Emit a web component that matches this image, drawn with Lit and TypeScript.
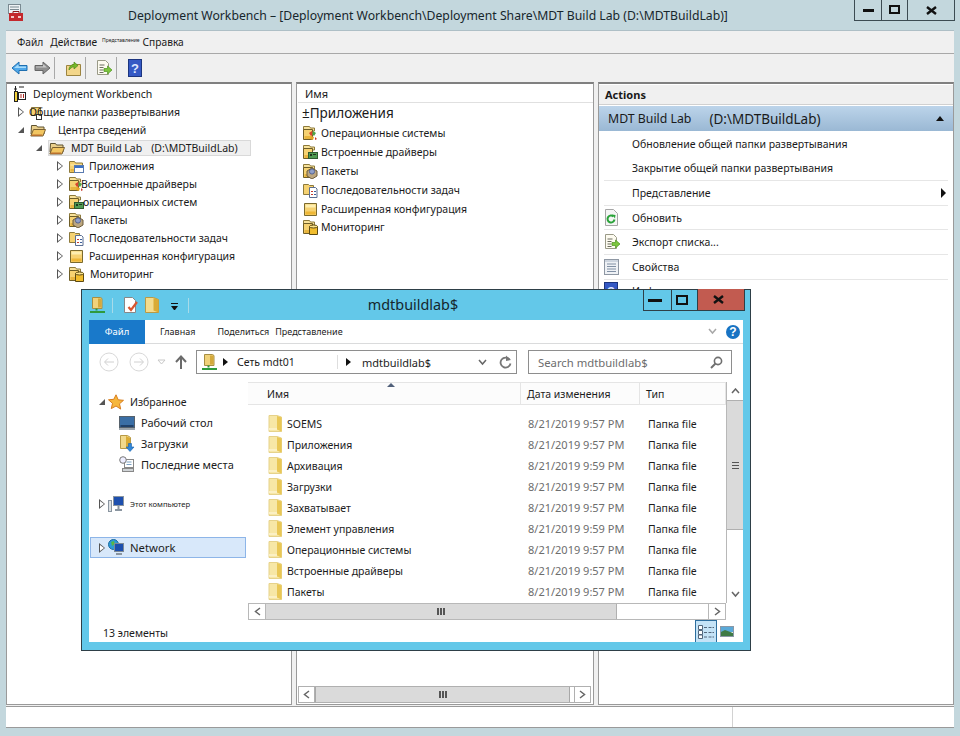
import { LitElement, css, html, svg } from "lit";
import { customElement } from "lit/decorators.js";

const icon = (w: number, h: number, body: unknown) =>
  html`<svg class="ico" width=${w} height=${h} viewBox="0 0 ${w} ${h}">${body}</svg>`;

const folderBase = svg`
  <path d="M1.500 3.500h5l1 1.500h7v9.500h-13z" fill="#f6d272" stroke="#8d7a3c"/>
  <path d="M2.500 6.500h11v1h-11z" fill="#fdeeb0"/>
  <path d="M2.500 11h11v2.500h-11z" fill="#e8b53e"/>`;

const backFolder = svg`
  <path d="M1.500 1.500h6l1 1.500h4v3h-11z" fill="#f8e29a" stroke="#8d7a3c"/>
  <path d="M1.500 4.500h9v10h-9z" fill="#f6d272" stroke="#6e5e28"/>
  <path d="M2.500 11h7v3h-7z" fill="#e8b53e"/>`;

const chevRight = svg`<path d="M1 1l4.500 3.500L1 8" fill="none" stroke="#666" stroke-width="1.500"/>`;
const chevLeft = svg`<path d="M6 1L1.500 4.500 6 8" fill="none" stroke="#666" stroke-width="1.500"/>`;

const icons: Record<string, () => unknown> = {
  open: () => icon(16, 16, svg`
    <path d="M1.500 3.500h5l1 1.500h6.500v7h-13z" fill="#e9cf8c" stroke="#5e5230"/>
    <path d="M3.500 7.500h12l-2.500 6.500H.8z" fill="#f2c661" stroke="#7a6030"/>
    <path d="M2 12.500h10.500l-1 1.500H1.500z" fill="#b9702e"/>`),
  apps: () => icon(16, 16, svg`${folderBase}
    <rect x="6.500" y="7.500" width="9" height="7" fill="#fff" stroke="#5a7bb0"/>
    <rect x="7" y="8" width="8" height="2" fill="#3d72c4"/>`),
  os: () => icon(16, 16, svg`${backFolder}
    <path d="M7 8l3-2 2 3-3 2z" fill="#d9432f"/><path d="M11 6l3 2-2 3-2-2z" fill="#4ea345"/>
    <path d="M9 11l3 1-1 3-3-1z" fill="#e4a526"/><path d="M13 12l2 2-2 1z" fill="#c93a2a"/>`),
  drivers: () => icon(16, 16, svg`${backFolder}
    <rect x="6.500" y="8.500" width="9" height="6" fill="#4f9a52" stroke="#2e5a30"/>
    <path d="M8 10h2v2H8zM11 10h3v1h-3z" fill="#20361f"/>`),
  packages: () => icon(16, 16, svg`${backFolder}
    <path d="M5 8l5-3 5 3v5l-5 3-5-3z" fill="#bda77f" stroke="#6c5a3a"/>
    <circle cx="10" cy="8.500" r="2.600" fill="#8f9fc9" stroke="#56648f"/>`),
  tasks: () => icon(16, 16, svg`
    <path d="M1.500 2.500h5l1 1h4v9h-10z" fill="#f6d272" stroke="#8d7a3c"/>
    <path d="M7.500 5.500h6l1.500 1.500v8.500h-7.500z" fill="#fff" stroke="#5b6f93"/>
    <path d="M9 9l1 1 1-1M9 12l1 1 1-1" fill="none" stroke="#c43a2e"/>
    <path d="M12 9.500h2M12 12.500h2" stroke="#3d5f9a"/>`),
  plain: () => icon(16, 16, svg`
    <path d="M2.500 2.500h12v12h-12z" fill="#f6d272" stroke="#7b6a2d"/>
    <path d="M3.500 3.500h10v3h-10z" fill="#fdeeb0"/><path d="M3.500 10.500h10v3h-10z" fill="#eeb736"/>`),
  monitor: () => icon(16, 16, svg`${backFolder}
    <path d="M7.500 7.500h8v8h-8z" fill="#f1bd2e" stroke="#5d4a12"/>
    <ellipse cx="11.500" cy="7.500" rx="4" ry="1.500" fill="#fbe48c" stroke="#5d4a12"/>`),
  shared: () => icon(16, 16, svg`
    <path d="M1.500 3.500h9v8h-9z" fill="#f6d272" stroke="#8d7a3c"/>
    <rect x="6.500" y="10.500" width="5" height="5" fill="#fff" stroke="#333"/>`),
  workbench: () => icon(14, 17, svg`
    <path d="M1 3h3M2.500 0v6M6 1h5" stroke="#222" fill="none"/>
    <rect x="1.500" y="5.500" width="3" height="10" fill="#f3d13a" stroke="#222"/>
    <rect x="5.500" y="6.500" width="7" height="7" fill="#fff" stroke="#222"/>
    <path d="M8 8v4M10.500 8v4" stroke="#b02a22"/>`),
  blueArrow: () => icon(17, 16, svg`
    <path d="M1 8l7-6v3.500h8v5H8V14z" fill="#4fa8ea" stroke="#1f6fb0"/>
    <path d="M3 8l4.500-3.800v2.300H15V8z" fill="#a8dcfa"/>`),
  greyArrow: () => icon(17, 16, svg`
    <path d="M16 8L9 2v3.500H1v5h8V14z" fill="#8f8f8f" stroke="#666"/>
    <path d="M2 6.500h7V4l4 3.500H2z" fill="#c9c9c9"/>`),
  upFolder: () => icon(15, 16, svg`
    <path d="M.5 5.500h5l1-1h8v11H.5z" fill="#f3d68a" stroke="#9c8440"/>
    <path d="M3 10C3 6 6 4.500 8 4.500V2l4 3.500L8 9V6.800C6 7 4.500 8 3 10z" fill="#76b82a" stroke="#4f8a18" stroke-width=".7"/>`),
  exportList: () => icon(16, 16, svg`
    <path d="M1.500.5h8l3 3v11h-11z" fill="#fdfbf0" stroke="#9a9a88"/>
    <path d="M3.500 5h5M3.500 7.500h4M3.500 10h4M3.500 12.500h4" stroke="#6c6c60"/>
    <path d="M8 8.500h3.500V6l4.500 4-4.500 4v-2.500H8z" fill="#7cc63e" stroke="#4f9320" stroke-width=".7"/>`),
  helpBook: () => icon(14, 18, svg`
    <rect x=".5" y=".5" width="13" height="17" fill="#3559c4" stroke="#1c357f"/>
    <text x="7" y="14" text-anchor="middle" font-family="Liberation Sans" font-size="13" font-weight="700" fill="#dfe7ff">?</text>`),
  refreshDoc: () => icon(15, 17, svg`
    <path d="M1.500.5h8l4 4v12h-12z" fill="#f5f5f5" stroke="#a5a5a5"/>
    <path d="M10.500 10.500a3.500 3.500 0 1 1-1-3" fill="none" stroke="#2aa33a" stroke-width="2"/>
    <path d="M8 5.500l3.500.5-.5 3.500z" fill="#2aa33a"/>`),
  props: () => icon(15, 16, svg`
    <rect x=".5" y=".5" width="14" height="15" fill="#eef1f5" stroke="#8e97a3"/>
    <path d="M3 5h9M3 7.500h9M3 10h9M3 12.500h9" stroke="#8090a4"/>
    <path d="M1 1h13v2H1z" fill="#cdd5df"/>`),
  quickNet: () => icon(15, 18, svg`
    <path d="M2.500 1.500h8l1.500 1v10h-9.500z" fill="#f0d27a" stroke="#a78e42"/>
    <path d="M8 2.500h3.500v9H8z" fill="#d4a93c"/>
    <path d="M6.500 12.500v2" stroke="#2e9a3c" stroke-width="2"/>
    <path d="M0 16h15" stroke="#2e9a3c" stroke-width="2"/>`),
  quickDoc: () => icon(16, 18, svg`
    <path d="M1.500 1.500h8l3 3v12h-11z" fill="#fff" stroke="#888"/>
    <path d="M5.500 11l2.500 3 6-8" fill="none" stroke="#d9552e" stroke-width="2.200"/>`),
  quickFolder: () => icon(14, 18, svg`
    <path d="M.5 1.500h8l5 2v13h-13z" fill="#f3dc8e" stroke="#b89a46"/>
    <path d="M8.500 2v12.500l5 2V3.500z" fill="#d9ab35"/>`),
  star: () => icon(16, 16, svg`
    <path d="M8 .8l2.200 5 5.300.5-4 3.500 1.200 5.300L8 12l-4.700 2.600 1.200-5.300-4-3.500 5.300-.5z" fill="#f6b73c" stroke="#d87d1f"/>`),
  desktop: () => icon(16, 14, svg`
    <rect x=".5" y=".5" width="15" height="11" fill="#3a6ea5" stroke="#56616b"/>
    <rect x="1.500" y="9" width="13" height="2" fill="#20416a"/>
    <path d="M0 13h16" stroke="#9aa3ab" stroke-width="2"/>`),
  downloads: () => icon(16, 17, svg`
    <path d="M1.500 .5h7l3 2v11h-10z" fill="#f1d98c" stroke="#b89a46"/>
    <path d="M7 1v11h4V3z" fill="#d9ab35"/>
    <path d="M9.500 8.500h3V12H15l-4 4.500L7 12h2.500z" fill="#2f86d8" stroke="#1a5ea8" stroke-width=".6"/>`),
  recent: () => icon(16, 17, svg`
    <rect x="5.500" y="3.500" width="9" height="8" fill="#fff" stroke="#888"/>
    <circle cx="4" cy="4" r="3.300" fill="#eef" stroke="#777"/>
    <path d="M7.500 6h5M7.500 8.500h5" stroke="#7ba1c4"/>
    <rect x="3.500" y="12.500" width="11" height="3" fill="#cfd3d6" stroke="#888"/>`),
  computer: () => icon(16, 16, svg`
    <rect x="5.500" y=".5" width="10" height="9" fill="#1d4fae" stroke="#8a95a0"/>
    <rect x=".5" y="4.500" width="3" height="11" fill="#dde1e4" stroke="#8a95a0"/>
    <path d="M7 14h7" stroke="#8a95a0" stroke-width="2"/><path d="M10.500 10v4" stroke="#8a95a0" stroke-width="2"/>`),
  network: () => icon(16, 17, svg`
    <circle cx="5.500" cy="5.500" r="5" fill="#2c9ad8" stroke="#1b6a9e"/>
    <path d="M3 3l3-1 1 3-3 2z" fill="#54b848"/>
    <rect x="6.500" y="4.500" width="9" height="8" fill="#1d4fae" stroke="#7d8a96"/>
    <path d="M8 15h6" stroke="#8a95a0" stroke-width="2"/>`),
  fileFolder: () => icon(14, 17, svg`
    <path d="M1 .5h8L13.500 2v14.500H1z" fill="#f7e7a6" stroke="#e6d28a"/>
    <path d="M9 1l4.500 1.500v14L9 14.500z" fill="#e9c755"/>
    <path d="M1 13h8v2H1z" fill="#fbf0c4"/>`),
  detailsView: () => icon(16, 14, svg`
    <path d="M.5.5h4v4h-4zM.5 5.500h4v4h-4zM.5 10h4v3.500h-4z" fill="#fff" stroke="#52677c"/>
    <path d="M6 2.500h3M10.500 2.500h3M14.500 2.500H16M6 7.500h3M10.500 7.500h3M14.500 7.500H16M6 12h3M10.500 12h3M14.500 12H16" stroke="#52677c"/>`),
  tilesView: () => icon(14, 11, svg`
    <rect x=".5" y=".5" width="13" height="10" fill="#fff" stroke="#8a98a6"/>
    <path d="M1 1h12v5H1z" fill="#5aa9d8"/><path d="M1 6l4-2 8 3v3H1z" fill="#3e7a45"/>`),
};

@customElement("explorer-window")
class ExplorerWindow extends LitElement {
  static styles = css`
    :host {
      position: absolute;
      left: 81px;
      top: 289px;
      width: 670px;
      height: 362px;
      box-sizing: border-box;
      border: 1px solid #2e3f47;
      background: #63c8e9;
      display: flex;
      flex-direction: column;
      font-family: "Noto Sans", sans-serif;
      font-size: 10.500px;
      color: #1c1c1c;
    }
    .ico { display: block; flex: none; }
    .title {
      height: 30px;
      display: flex;
      align-items: flex-start;
      position: relative;
      padding: 6px 0 0 8px;
      box-sizing: border-box;
    }
    .title .ico { margin-right: 6px; }
    .vsep { width: 1px; height: 15px; margin: 2px 10px 0 1px; background: #a7dbe9; }
    .drop { margin: 7px 9px 0 6px; width: 7px; border-top: 1px solid #111; }
    .drop::after {
      content: "";
      display: block;
      margin: 2px 0 0 0;
      border: 3.500px solid transparent;
      border-top: 4px solid #111;
      border-bottom: 0;
    }
    .name {
      position: absolute;
      left: 0;
      right: 6px;
      top: 5px;
      text-align: center;
      font-size: 14.400px;
      color: #15262d;
    }
    .ctl {
      position: absolute;
      top: -1px;
      right: 5px;
      display: flex;
      height: 22px;
      box-sizing: border-box;
      border: 1px solid #2e3f47;
      border-top: 0;
    }
    .ctl div {
      display: flex;
      align-items: center;
      justify-content: center;
      border-left: 1px solid #2e3f47;
    }
    .ctl div:first-child { border-left: 0; width: 27px; }
    .ctl .max { width: 25px; }
    .ctl .close { width: 46px; background: #c25b50; }
    .client {
      flex: 1;
      margin: 0 7px 8px 7px;
      background: #fff;
      display: flex;
      flex-direction: column;
      min-height: 0;
    }
    .tabs {
      height: 23px;
      border-bottom: 1px solid #dadbdc;
      display: flex;
      align-items: center;
      font-size: 9px;
      flex: none;
    }
    .file {
      width: 56px;
      height: 24px;
      background: #1979ca;
      color: #fff;
      text-align: center;
      line-height: 24px;
      font-size: 9.500px;
    }
    .tab { margin-left: 15px; }
    .tab:nth-of-type(3) { margin-left: 22px; }
    .tab:nth-of-type(4) { margin-left: 6px; }
    .tabs .right { margin-left: auto; display: flex; align-items: center; gap: 9px; padding-right: 3px; }
    .help {
      width: 14px;
      height: 14px;
      border-radius: 50%;
      background: #1873c3;
      color: #fff;
      font: 700 12px/14px "Liberation Sans", sans-serif;
      text-align: center;
    }
    .addr {
      height: 24px;
      margin: 6px 0 0 0;
      display: flex;
      align-items: center;
      flex: none;
    }
    .circle { margin-left: 10px; }
    .circle.down { margin-left: 8px; }
    .circle.up { margin-left: 9px; }
    .box {
      height: 24px;
      box-sizing: border-box;
      border: 1px solid #8e8e8e;
      display: flex;
      align-items: center;
    }
    .path { width: 321px; margin-left: 9px; padding-left: 5px; }
    .tri {
      width: 0;
      border: 4px solid transparent;
      border-left: 5px solid #111;
      border-right: 0;
      flex: none;
      margin: 0 9px 0 6px;
    }
    .path .cell { width: 100px; }
    .path .div { width: 1px; height: 14px; background: #dedede; }
    .tri.second { margin: 0 11px 0 8px; }
    .path .last { font-size: 11px; }
    .path .end { margin-left: auto; display: flex; gap: 12px; padding-right: 4px; align-items: center; }
    .search {
      width: 204px;
      margin-left: 11px;
      padding: 0 8px 0 9px;
      justify-content: space-between;
      color: #6d6d6d;
      font-size: 11.300px;
    }
    .body {
      flex: 1;
      display: flex;
      margin-top: 8px;
      min-height: 0;
    }
    .nav {
      width: 159px;
      flex: none;
      padding-top: 9px;
      box-sizing: border-box;
    }
    .nrow { display: flex; align-items: center; height: 21px; font-size: 11px; }
    .nrow .ico { margin-right: 6px; }
    .nrow.sub { padding-left: 30px; }
    .nrow.fav { font-size: 10.500px; }
    .small { font-size: 7.700px; margin-top: 18px; }
    .nrow.sel {
      margin: 23px 0 0 1px;
      background: #d8e8fa;
      border: 1px solid #8db5e8;
      box-sizing: border-box;
      width: 156px;
      font-size: 11.300px;
    }
    .tw { flex: none; width: 6px; margin: 0 3px 0 10px; position: relative; }
    .sel .tw { margin-left: 8px; }
    .t-closed {
      width: 0;
      border: 5px solid transparent;
      border-left: 6px solid #555;
      border-right: 0;
    }
    .t-closed::after {
      content: "";
      position: absolute;
      left: 1px;
      top: 2px;
      border: 3px solid transparent;
      border-left: 4px solid #fff;
      border-right: 0;
    }
    .t-open { width: 0; border-bottom: 6px solid #555; border-left: 6px solid transparent; }
    .main { flex: 1; display: flex; flex-direction: column; min-width: 0; }
    .top { flex: 1; display: flex; min-height: 0; }
    .list { flex: 1; min-width: 0; display: flex; flex-direction: column; }
    .head {
      height: 23px;
      flex: none;
      border-top: 1px solid #e5e5e5;
      border-bottom: 1px solid #e5e5e5;
      background: #fcfcfc;
      display: grid;
      grid-template-columns: 273px 119px 1fr;
      align-items: center;
      box-sizing: border-box;
      position: relative;
      font-size: 10.500px;
    }
    .head span { padding-left: 6px; height: 100%; line-height: 22px; border-right: 1px solid #e5e5e5; }
    .head span:first-child { padding-left: 19px; }
    .head span:last-child { border-right: 0; }
    .sort {
      position: absolute;
      left: 139px;
      top: 0;
      border: 4px solid transparent;
      border-top: 0;
      border-bottom: 4px solid #51607a;
    }
    .rows { padding-top: 8px; flex: 1; overflow: hidden; }
    .frow {
      height: 21px;
      display: grid;
      grid-template-columns: 20px 19px 241px 120px 1fr;
      align-items: center;
    }
    .frow .date { color: #6d6d6d; font-size: 11px; }
    .sb { display: flex; flex: none; background: #fff; box-sizing: border-box; }
    .sb.v { width: 17px; flex-direction: column; border-left: 1px solid #b8b8b8; }
    .sb.h { height: 17px; border-top: 1px solid #b8b8b8; border-bottom: 1px solid #b8b8b8; }
    .sbtn {
      flex: none;
      display: flex;
      align-items: center;
      justify-content: center;
      box-sizing: border-box;
      background: #fff;
    }
    .sb.v .sbtn { height: 18px; }
    .sb.h .sbtn { width: 18px; border: 1px solid #b8b8b8; margin-top: -1px; margin-bottom: -1px; }
    .thumb { background: #dadada; border: 0 solid #b0b0b0; display: flex; align-items: center; justify-content: center; }
    .sb.v .thumb { height: 128px; border-width: 1px 0; }
    .sb.h .thumb { width: 350px; border-right-width: 1px; }
    .grip { width: 8px; height: 7px; background: repeating-linear-gradient(90deg, #555 0 2px, transparent 2px 3px); }
    .gv { width: 7px; height: 8px; background: repeating-linear-gradient(0deg, #555 0 1px, transparent 1px 3px); }
    .hole { flex: 1; }
    .corner { flex: none; width: 17px; }
    .hrow { display: flex; flex: none; }
    .hrow .sb { flex: 1; }
    .status {
      height: 22px;
      flex: none;
      display: flex;
      align-items: center;
      padding-left: 14px;
    }
    .status > span { margin-top: 3px; }
    .views { margin-left: auto; display: flex; height: 100%; align-items: center; }
    .vbtn { width: 22px; height: 22px; display: flex; align-items: center; justify-content: center; box-sizing: border-box; margin-right: 4px; }
    .vbtn.on { background: #c4e3f7; border: 1px solid #2d6e9e; border-bottom: 0; margin-right: 0; }
    .vbtn:last-child { width: 20px; margin-right: 6px; }
  `;

  files: [string, string][] = [
    ["SOEMS", "8/21/2019 9:57 PM"],
    ["Приложения", "8/21/2019 9:57 PM"],
    ["Архивация", "8/21/2019 9:59 PM"],
    ["Загрузки", "8/21/2019 9:57 PM"],
    ["Захватывает", "8/21/2019 9:57 PM"],
    ["Элемент управления", "8/21/2019 9:59 PM"],
    ["Операционные системы", "8/21/2019 9:57 PM"],
    ["Встроенные драйверы", "8/21/2019 9:57 PM"],
    ["Пакеты", "8/21/2019 9:57 PM"],
  ];

  chev(d: string, c = "#666") {
    return icon(9, 7, svg`<path d=${d} fill="none" stroke=${c} stroke-width="1.500"/>`);
  }

  render() {
    return html`
      <div class="title">
        ${icons.quickNet()}
        <div class="vsep"></div>
        ${icons.quickDoc()}
        ${icons.quickFolder()}
        <div class="drop"></div>
        <div class="vsep"></div>
        <div class="name">mdtbuildlab$</div>
        <div class="ctl">
          <div>${icon(14, 4, svg`<rect width="14" height="3" y="1" fill="#111"/>`)}</div>
          <div class="max">${icon(12, 10, svg`<rect x="1" y="1" width="10" height="8" fill="none" stroke="#111" stroke-width="2"/>`)}</div>
          <div class="close">${icon(11, 9, svg`<path d="M1 1l9 7M10 1l-9 7" stroke="#111" stroke-width="2.400"/>`)}</div>
        </div>
      </div>
      <div class="client">
        <div class="tabs">
          <div class="file">Файл</div>
          <div class="tab">Главная</div>
          <div class="tab">Поделиться</div>
          <div class="tab">Представление</div>
          <div class="right">
            ${this.chev("M1 1l3.500 4L8 1", "#a8a8a8")}
            <div class="help">?</div>
          </div>
        </div>
        <div class="addr">
          <div class="circle">${icon(20, 20, svg`<circle cx="10" cy="10" r="9" fill="none" stroke="#d8d8d8"/><path d="M15 10H6M9 6.500L5.500 10 9 13.500" fill="none" stroke="#d0d0d0"/>`)}</div>
          <div class="circle">${icon(20, 20, svg`<circle cx="10" cy="10" r="9" fill="none" stroke="#d8d8d8"/><path d="M5 10h9M11 6.500l3.500 3.500-3.500 3.500" fill="none" stroke="#d0d0d0"/>`)}</div>
          <div class="circle down">${icon(9, 6, svg`<path d="M1 1h7L4.500 5z" fill="none" stroke="#c8c8c8"/>`)}</div>
          <div class="circle up">${icon(12, 14, svg`<path d="M6 14V2M1 7l5-5.500L11 7" fill="none" stroke="#6b6b6b" stroke-width="2"/>`)}</div>
          <div class="box path">
            ${icons.quickNet()}
            <div class="tri"></div>
            <div class="cell">Сеть mdt01</div>
            <div class="div"></div>
            <div class="tri second"></div>
            <div class="last">mdtbuildlab$</div>
            <div class="end">
              ${this.chev("M1 1l3.500 4L8 1")}
              ${icon(13, 14, svg`<path d="M10.500 4.500a5 5 0 1 0 1 4" fill="none" stroke="#777" stroke-width="1.800"/><path d="M7 .5v5.500l5-1z" fill="#777"/>`)}
            </div>
          </div>
          <div class="box search">
            <span>Search mdtbuildlab$</span>
            ${icon(13, 13, svg`<circle cx="8" cy="5" r="3.600" fill="none" stroke="#6f6f6f" stroke-width="1.600"/><path d="M5.500 7.500L1 12" stroke="#6f6f6f" stroke-width="2"/>`)}
          </div>
        </div>
        <div class="body">
          <div class="nav">
            <div class="nrow fav">
              <div class="tw"><div class="t-open"></div></div>
              ${icons.star()}<span>Избранное</span>
            </div>
            <div class="nrow sub">${icons.desktop()}<span>Рабочий стол</span></div>
            <div class="nrow sub">${icons.downloads()}<span>Загрузки</span></div>
            <div class="nrow sub">${icons.recent()}<span>Последние места</span></div>
            <div class="nrow small">
              <div class="tw"><div class="t-closed"></div></div>
              ${icons.computer()}<span>Этот компьютер</span>
            </div>
            <div class="nrow sel">
              <div class="tw"><div class="t-closed"></div></div>
              ${icons.network()}<span>Network</span>
            </div>
          </div>
          <div class="main">
            <div class="top">
              <div class="list">
                <div class="head">
                  <span>Имя</span><span>Дата изменения</span><span>Тип</span>
                  <div class="sort"></div>
                </div>
                <div class="rows">
                  ${this.files.map(
                    ([n, d]) => html`<div class="frow">
                      <span></span>${icons.fileFolder()}<span>${n}</span>
                      <span class="date">${d}</span><span>Папка file</span>
                    </div>`
                  )}
                </div>
              </div>
              <div class="sb v">
                <div class="sbtn">${this.chev("M1 5l3.500-4L8 5")}</div>
                <div class="thumb"><div class="gv"></div></div>
                <div class="hole"></div>
                <div class="sbtn">${this.chev("M1 1l3.500 4L8 1")}</div>
              </div>
            </div>
            <div class="hrow">
              <div class="sb h">
                <div class="sbtn">${icon(7, 9, chevLeft)}</div>
                <div class="thumb"><div class="grip"></div></div>
                <div class="hole"></div>
                <div class="sbtn">${icon(7, 9, chevRight)}</div>
              </div>
              <div class="corner"></div>
            </div>
          </div>
        </div>
        <div class="status">
          <span>13 элементы</span>
          <div class="views">
            <div class="vbtn on">${icons.detailsView()}</div>
            <div class="vbtn">${icons.tilesView()}</div>
          </div>
        </div>
      </div>
    `;
  }
}

type TreeRow = {
  label: string;
  icon: string;
  arrow?: "open" | "closed";
  ax: number;
  ix: number;
  tx: number;
  extra?: string;
};

const treeRows: TreeRow[] = [
  { label: "Deployment Workbench", icon: "workbench", ax: 6, ix: 13, tx: 33 },
  { label: "Общие папки развертывания", icon: "shared", arrow: "closed", ax: 18, ix: 30, tx: 29 },
  { label: "Центра сведений", icon: "open", arrow: "open", ax: 18, ix: 30, tx: 58 },
  { label: "MDT Build Lab", extra: "(D:\\MDTBuildLab)", icon: "open", arrow: "open", ax: 36, ix: 49, tx: 71 },
  { label: "Приложения", icon: "apps", arrow: "closed", ax: 57, ix: 68, tx: 89 },
  { label: "Встроенные драйверы", icon: "os", arrow: "closed", ax: 57, ix: 68, tx: 81 },
  { label: "операционных систем", icon: "drivers", arrow: "closed", ax: 57, ix: 68, tx: 83 },
  { label: "Пакеты", icon: "packages", arrow: "closed", ax: 57, ix: 68, tx: 90 },
  { label: "Последовательности задач", icon: "tasks", arrow: "closed", ax: 57, ix: 68, tx: 89 },
  { label: "Расширенная конфигурация", icon: "plain", arrow: "closed", ax: 57, ix: 68, tx: 89 },
  { label: "Мониторинг", icon: "monitor", arrow: "closed", ax: 57, ix: 68, tx: 90 },
];

const listRows: [string, string][] = [
  ["os", "Операционные системы"],
  ["drivers", "Встроенные драйверы"],
  ["packages", "Пакеты"],
  ["tasks", "Последовательности задач"],
  ["plain", "Расширенная конфигурация"],
  ["monitor", "Мониторинг"],
];

@customElement("app-root")
export class AppRoot extends LitElement {
  static styles = css`
    :host {
      display: block;
      position: relative;
      width: 960px;
      height: 736px;
      overflow: hidden;
      background: #c3d7dd;
      font-family: "Noto Sans", sans-serif;
      font-size: 10.500px;
      color: #1a1a1a;
    }
    .ico { display: block; flex: none; }
    .titlebar {
      height: 30px;
      display: flex;
      align-items: flex-start;
      padding-left: 8px;
      box-sizing: border-box;
    }
    .app { margin-top: 4px; }
    .wtitle { margin: 7px 0 0 104px; font-size: 12.230px; white-space: nowrap; color: #17262c; }
    .wctl {
      margin: 0 5px 0 auto;
      display: flex;
      height: 21px;
      box-sizing: border-box;
      border: 1px solid #3c4b52;
      border-top: 0;
    }
    .wctl div { display: flex; align-items: center; justify-content: center; border-left: 1px solid #3c4b52; width: 25px; }
    .wctl div:first-child { width: 26px; border-left: 0; }
    .wctl div:last-child { width: 46px; }
    .client {
      margin: 0 6px;
      height: 698px;
      background: #f0f0f0;
      border-top: 1px solid #aebfc6;
      box-sizing: border-box;
      display: flex;
      flex-direction: column;
    }
    .menu {
      height: 22px;
      flex: none;
      display: flex;
      align-items: center;
      padding-left: 11px;
      border-bottom: 1px solid #a8a8a8;
      font-size: 10.200px;
    }
    .menu span { margin-right: 7px; }
    .menu .tiny { font-size: 5px; margin: 6px 3px 0 -2px; align-self: flex-start; }
    .tools {
      height: 27px;
      flex: none;
      display: flex;
      align-items: center;
      padding-left: 5px;
    }
    .tools .sep { width: 1px; height: 22px; background: #a9a9a9; }
    .s3 { width: 3px; }
    .s4 { width: 4px; }
    .s6 { width: 6px; }
    .s10 { width: 10px; }
    .s11 { width: 11px; }
    .panes {
      flex: 1;
      min-height: 0;
      display: grid;
      grid-template-columns: 286px 298px 1fr;
      gap: 4px;
      margin-top: 1px;
    }
    .pane {
      background: #fff;
      border: 1px solid #9a9a9a;
      border-top: 2px solid #808080;
      box-sizing: border-box;
      display: flex;
      flex-direction: column;
      min-height: 0;
      overflow: hidden;
    }
    .tree { flex: 1; padding-top: 1px; }
    .trow { height: 18px; display: flex; align-items: center; white-space: nowrap; position: relative; }
    .trow .txt { position: relative; }
    .hl {
      position: absolute;
      left: 41px;
      top: 1px;
      width: 203px;
      height: 16px;
      background: #f0f0f0;
      border: 1px solid #d9d9d9;
      box-sizing: border-box;
    }
    .trow .ico { position: relative; }
    .extra { margin-left: 9px; }
    .tw { width: 6px; flex: none; position: relative; }
    .t-closed {
      width: 0;
      border: 5px solid transparent;
      border-left: 6px solid #555;
      border-right: 0;
    }
    .t-closed::after {
      content: "";
      position: absolute;
      left: 1px;
      top: 2px;
      border: 3px solid transparent;
      border-left: 4px solid #fff;
      border-right: 0;
    }
    .t-open { width: 0; border-bottom: 6px solid #555; border-left: 6px solid transparent; }
    .sb {
      height: 17px;
      flex: none;
      display: flex;
      border-top: 1px solid #b0b0b0;
      border-bottom: 1px solid #b0b0b0;
      margin: 0 2px 1px 1px;
      box-sizing: border-box;
    }
    .sb .thumb {
      flex: 1;
      background: #dadada;
      border: 0 solid #a8a8a8;
      border-width: 0 1px;
      display: flex;
      align-items: center;
      justify-content: center;
    }
    .sb .gap { width: 4px; }
    .sb .btn {
      width: 17px;
      flex: none;
      border: 1px solid #b0b0b0;
      margin: -1px 0;
      background: #fff;
      box-sizing: border-box;
      display: flex;
      align-items: center;
      justify-content: center;
    }
    .grip { width: 8px; height: 7px; background: repeating-linear-gradient(90deg, #555 0 2px, transparent 2px 3px); }
    .mhead {
      height: 17px;
      flex: none;
      border-bottom: 1px solid #e0e0e0;
      margin: 1px 0 0 1px;
      padding-left: 7px;
      font-size: 11px;
      line-height: 17px;
    }
    .mlist { flex: 1; padding-left: 5px; }
    .mfirst { font-size: 13.500px; line-height: 20px; height: 21px; }
    .mrow { display: flex; align-items: center; height: 18.800px; gap: 3px; }
    .ahead {
      height: 19px;
      flex: none;
      margin-top: 1px;
      padding-left: 6px;
      background: #f0f0f0;
      font: 700 11px/19px "Noto Sans", sans-serif;
      border-bottom: 1px solid #d0d0d0;
    }
    .asec {
      height: 25px;
      flex: none;
      margin-top: 1px;
      background: linear-gradient(#bcd4ea, #9ab8d4);
      display: flex;
      align-items: center;
      padding: 0 9px;
      font-size: 12.300px;
    }
    .asec .path { font-size: 13.500px; margin-left: 18px; }
    .up {
      margin-left: auto;
      border: 4.500px solid transparent;
      border-top: 0;
      border-bottom: 5px solid #111;
    }
    .alist { padding-top: 1px; }
    .aitem {
      height: 24.600px;
      display: flex;
      align-items: center;
      margin: 0 5px;
      border-bottom: 1px solid transparent;
      box-sizing: border-box;
    }
    .aitem.line { border-bottom-color: #e6e6e6; }
    .aicon { width: 28px; flex: none; }
    .more {
      margin-left: auto;
      margin-right: 2px;
      border: 5px solid transparent;
      border-left: 5px solid #111;
      border-right: 0;
    }
    .status {
      height: 22px;
      flex: none;
      border-top: 1px solid #9a9a9a;
      border-bottom: 1px solid #9a9a9a;
      margin-top: 1px;
      background: #fff;
      box-sizing: border-box;
      display: flex;
      justify-content: flex-end;
    }
    .status div { width: 221px; border-left: 1px solid #d2d2d2; }
  `;

  treeRow(r: TreeRow) {
    const iconW = r.icon === "workbench" ? 14 : 16;
    const pad = r.arrow ? r.ax : r.ix;
    const afterArrow = r.arrow ? r.ix - r.ax - 6 : 0;
    return html`
      <div class="trow" style="padding-left:${pad - 7}px">
        ${r.extra ? html`<div class="hl"></div>` : ""}
        ${r.arrow
          ? html`<div class="tw" style="margin-right:${afterArrow}px">
              <div class=${r.arrow === "open" ? "t-open" : "t-closed"}></div>
            </div>`
          : ""}
        ${icons[r.icon]()}
        <span class="txt" style="margin-left:${r.tx - r.ix - iconW}px">${r.label}${r.extra
          ? html`<span class="extra">${r.extra}</span>`
          : ""}</span>
      </div>
    `;
  }

  action(label: string, ic?: string, line = false, more = false) {
    return html`
      <div class="aitem ${line ? "line" : ""}">
        <div class="aicon">${ic ? icons[ic]() : ""}</div>
        <span>${label}</span>
        ${more ? html`<div class="more"></div>` : ""}
      </div>
    `;
  }

  render() {
    return html`
      <div class="titlebar">
        <div class="app">
          ${icon(16, 20, svg`
            <rect x=".5" y=".5" width="12" height="9" fill="#eef2f4" stroke="#7a8a92"/>
            <path d="M2 3h9M2 5.500h9" stroke="#7a8a92"/>
            <path d="M5 9V7.500h6V9" fill="none" stroke="#8c1c1c"/>
            <rect x="1" y="9" width="14" height="8" fill="#c4282c"/>
            <rect x="3" y="12" width="3" height="2" fill="#f4c6c6"/><rect x="10" y="12" width="3" height="2" fill="#f4c6c6"/>`)}
        </div>
        <div class="wtitle">Deployment Workbench – [Deployment Workbench\\Deployment Share\\MDT Build Lab (D:\\MDTBuildLab)]</div>
        <div class="wctl">
          <div>${icon(14, 4, svg`<rect width="11" height="3" y="1" x="2" fill="#111"/>`)}</div>
          <div>${icon(12, 10, svg`<rect x="1" y="1" width="9" height="7" fill="none" stroke="#111" stroke-width="2"/>`)}</div>
          <div>${icon(11, 9, svg`<path d="M1 1l9 7M10 1l-9 7" stroke="#111" stroke-width="2.400"/>`)}</div>
        </div>
      </div>
      <div class="client">
        <div class="menu">
          <span>Файл</span><span>Действие</span><span class="tiny">Представление</span><span>Справка</span>
        </div>
        <div class="tools">
          ${icons.blueArrow()}<span class="s6"></span>${icons.greyArrow()}<span class="s3"></span>
          <div class="sep"></div><span class="s11"></span>
          ${icons.upFolder()}<span class="s4"></span>
          <div class="sep"></div><span class="s10"></span>
          ${icons.exportList()}<span class="s4"></span>
          <div class="sep"></div><span class="s11"></span>
          ${icons.helpBook()}
        </div>
        <div class="panes">
          <div class="pane">
            <div class="tree">${treeRows.map((r) => this.treeRow(r))}</div>
          </div>
          <div class="pane">
            <div class="mhead">Имя</div>
            <div class="mlist">
              <div class="mfirst">±Приложения</div>
              ${listRows.map(([ic, t]) => html`<div class="mrow">${icons[ic]()}<span>${t}</span></div>`)}
            </div>
            <div class="sb">
              <div class="btn">${icon(7, 9, chevLeft)}</div>
              <div class="thumb"><div class="grip"></div></div>
              <div class="gap"></div>
              <div class="btn">${icon(7, 9, chevRight)}</div>
            </div>
          </div>
          <div class="pane">
            <div class="ahead">Actions</div>
            <div class="asec">
              <span>MDT Build Lab</span><span class="path">(D:\\MDTBuildLab)</span>
              <div class="up"></div>
            </div>
            <div class="alist">
              ${this.action("Обновление общей папки развертывания")}
              ${this.action("Закрытие общей папки развертывания", undefined, true)}
              ${this.action("Представление", undefined, true, true)}
              ${this.action("Обновить", "refreshDoc", true)}
              ${this.action("Экспорт списка...", "exportList", true)}
              ${this.action("Свойства", "props", true)}
              ${this.action("Информация", "helpBook")}
            </div>
          </div>
        </div>
        <div class="status"><div></div></div>
      </div>
      <explorer-window></explorer-window>
    `;
  }
}
